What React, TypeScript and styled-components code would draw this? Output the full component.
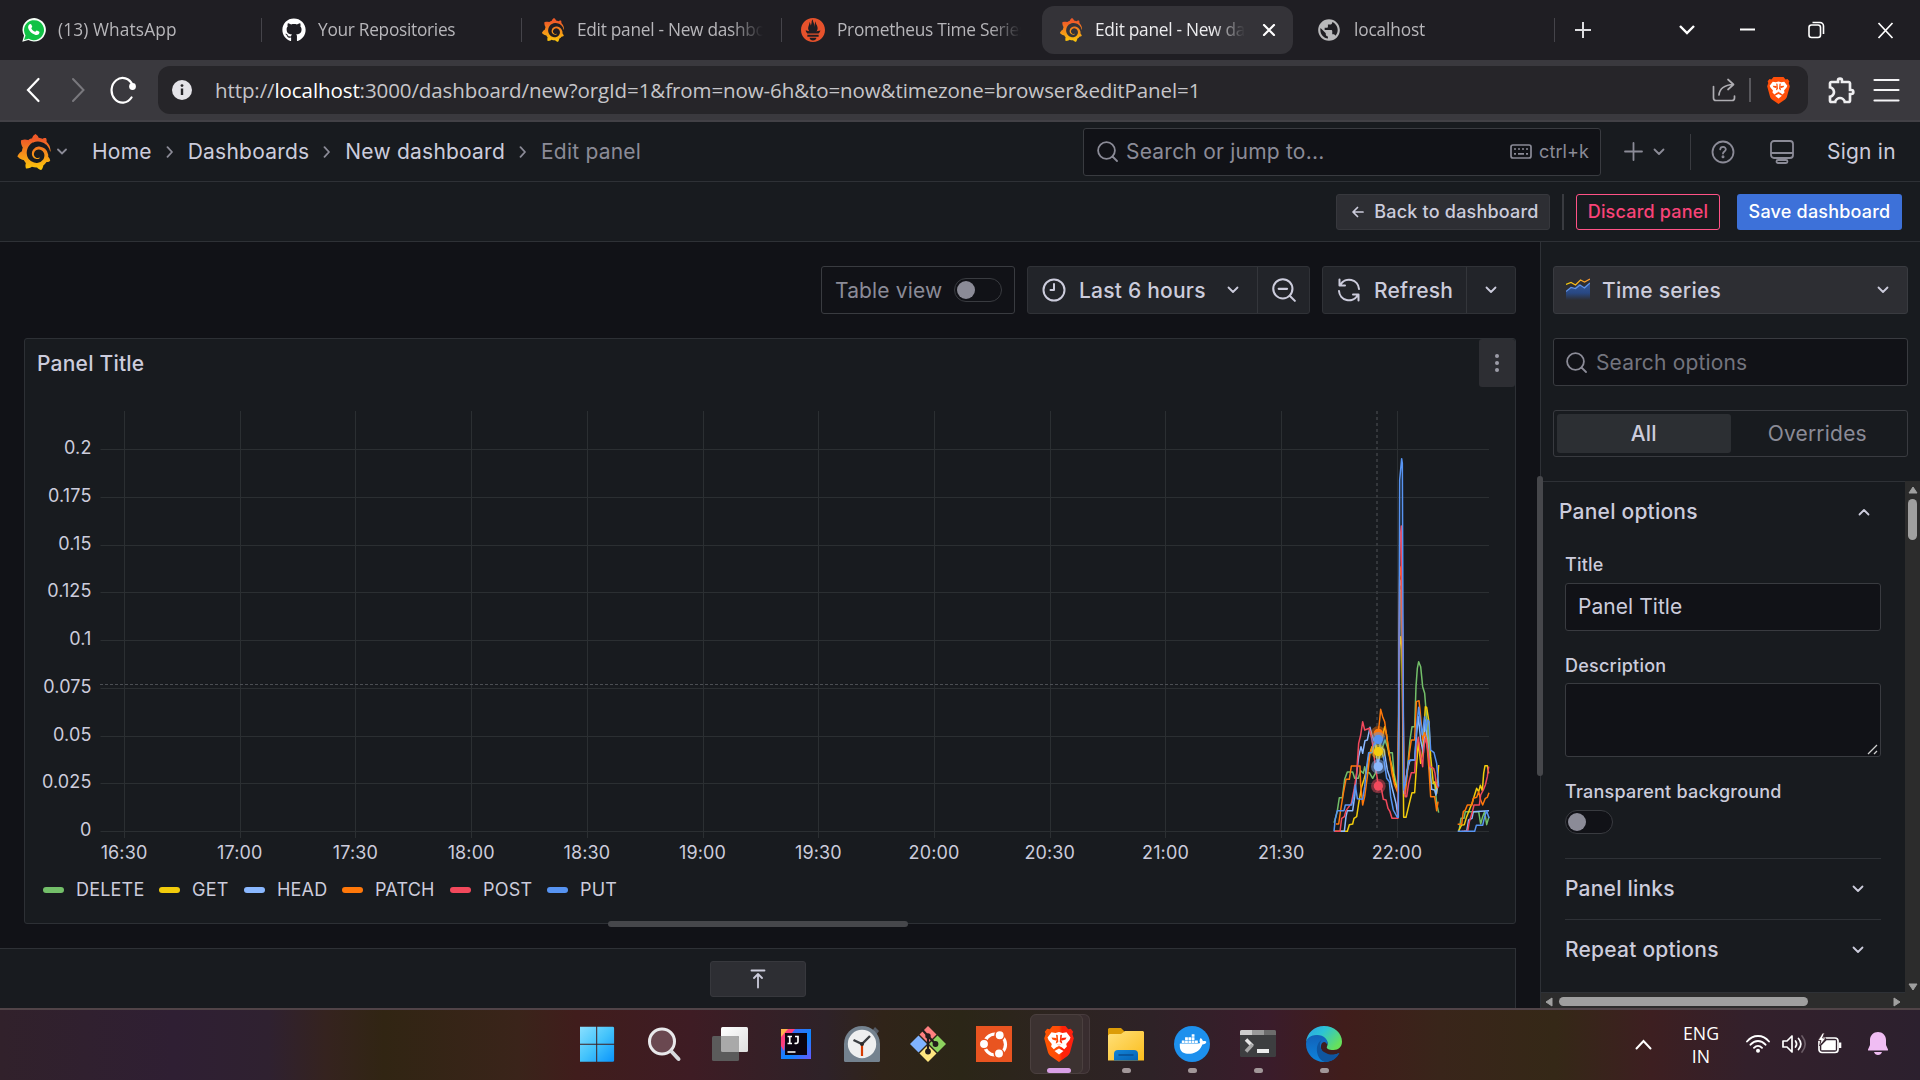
import React from "react";
import styled, { createGlobalStyle, css } from "styled-components";
import { FaGithub } from "react-icons/fa";
import { SiGrafana, SiPrometheus, SiDocker } from "react-icons/si";
import { MdPublic, MdOutlineExtension } from "react-icons/md";

const c = {
  canvas: "#111217",
  primary: "#181b1f",
  secondary: "#2d2e33",
  toolbar: "#222429",
  line: "#2e3136",
  border: "#393b40",
  text: "#ccccdc",
  muted: "#8b8b97",
};

const Global = createGlobalStyle`
  * { box-sizing: border-box; }
  body { margin: 0; background: ${c.canvas}; overflow: hidden; }
  svg { display: block; flex: none; }
`;

const Screen = styled.div`
  width: 1920px;
  height: 1080px;
  display: flex;
  flex-direction: column;
  overflow: hidden;
  font-family: Inter, "Liberation Sans", sans-serif;
  color: ${c.text};
  background: ${c.canvas};
`;

/* ---------- browser chrome ---------- */

const TabStrip = styled.div`
  height: 60px;
  flex: none;
  display: flex;
  align-items: center;
  background: #1f1e23;
  font-family: "Segoe UI", "Open Sans", "Noto Sans", sans-serif;
`;

const Tab = styled.div<{ $active?: boolean; $w: number; $pad: number }>`
  width: ${(p) => p.$w}px;
  height: 48px;
  flex: none;
  padding-left: ${(p) => p.$pad}px;
  display: flex;
  align-items: center;
  gap: 12px;
  border-radius: 12px;
  color: ${(p) => (p.$active ? "#ececee" : "#b7b6ba")};
  background: ${(p) => (p.$active ? "#343338" : "transparent")};
`;

const TabTitle = styled.span<{ $w: number; $ls?: number }>`
  width: ${(p) => p.$w}px;
  flex: none;
  overflow: hidden;
  white-space: nowrap;
  font-size: 17.3px;
  line-height: 26px;
  letter-spacing: ${(p) => p.$ls ?? -0.28}px;
  mask-image: linear-gradient(90deg, #000 calc(100% - 32px), transparent);
`;

const TabRule = styled.i`
  width: 1px;
  height: 24px;
  flex: none;
  background: #45444a;
`;

const WindowButtons = styled.div`
  flex: 1;
  height: 60px;
  display: flex;
  align-items: center;
  padding-left: 18px;
`;

const ControlSlot = styled.div<{ $w: number }>`
  width: ${(p) => p.$w}px;
  flex: none;
  display: flex;
`;

const AddressBar = styled.div`
  height: 62px;
  flex: none;
  display: flex;
  align-items: center;
  padding-left: 22px;
  background: #3a393e;
  border-bottom: 2px solid #424146;
`;

const NavIcons = styled.div`
  width: 136px;
  flex: none;
  display: flex;
  align-items: center;
`;

const UrlField = styled.div`
  width: 1650px;
  height: 48px;
  flex: none;
  display: flex;
  align-items: center;
  padding: 0 18px 0 14px;
  border-radius: 12px;
  background: #262529;
  color: #c6c5c9;
  font: 20.5px/28px "Segoe UI", "Open Sans", "Noto Sans", sans-serif;
`;

const Url = styled.span`
  flex: 1;
  padding: 0 0 0 23px;
  white-space: nowrap;
  letter-spacing: -0.09px;
  b { font-weight: 400; color: #fff; }
`;

/* ---------- grafana header ---------- */

const Header = styled.header`
  height: 60px;
  flex: none;
  display: flex;
  align-items: center;
  padding-left: 16px;
  background: ${c.primary};
  border-bottom: 1px solid ${c.line};
`;

const Crumbs = styled.nav`
  display: flex;
  align-items: center;
  width: 1016px;
  flex: none;
  padding-left: 25px;
  font-size: 21px;
  line-height: 30px;
  letter-spacing: 0.22px;
  white-space: nowrap;
`;

const Crumb = styled.span<{ $last?: boolean }>`
  color: ${(p) => (p.$last ? c.muted : c.text)};
`;

const CrumbSep = styled.span`
  width: 36px;
  display: flex;
  justify-content: center;
`;

const SearchBox = styled.div`
  width: 518px;
  height: 48px;
  flex: none;
  display: flex;
  align-items: center;
  padding: 0 11px 0 13px;
  border: 1px solid ${c.border};
  border-radius: 3px;
  background: ${c.canvas};
  color: ${c.muted};
  font-size: 21px;
  letter-spacing: 0.22px;
  span { flex: 1; padding-left: 8px; }
  small { font-size: 18px; padding-left: 7px; letter-spacing: 0.1px; }
`;

const HeaderActions = styled.div`
  display: flex;
  align-items: center;
  padding-left: 23px;
  font-size: 21px;
  letter-spacing: 0.22px;
  white-space: nowrap;
`;

const Rule = styled.i<{ $h: number; $ml: number; $mr: number; $w?: number; $color?: string }>`
  width: ${(p) => p.$w ?? 1}px;
  height: ${(p) => p.$h}px;
  flex: none;
  margin: 0 ${(p) => p.$mr}px 0 ${(p) => p.$ml}px;
  background: ${(p) => p.$color ?? c.border};
`;

const ActionRow = styled.div`
  height: 60px;
  flex: none;
  display: flex;
  align-items: center;
  justify-content: flex-end;
  padding: 1px 18px 0 0;
  background: ${c.primary};
  border-bottom: 1px solid ${c.line};
`;

const Button = styled.div<{ $kind: "secondary" | "outline" | "primary"; $w: number }>`
  width: ${(p) => p.$w}px;
  height: 36px;
  display: flex;
  align-items: center;
  justify-content: center;
  gap: 10px;
  padding-bottom: 1px;
  border-radius: 3px;
  font-size: 18px;
  font-weight: 500;
  letter-spacing: 0.2px;
  white-space: nowrap;
  ${(p) =>
    p.$kind === "secondary"
      ? css`background: ${c.secondary}; border: 1px solid #37383d; color: ${c.text}; padding-left: 5px;`
      : p.$kind === "outline"
      ? css`border: 1px solid #ff5286; color: #f94378;`
      : css`background: #3d71d9; color: #fff;`}
`;

const ButtonGap = styled.i`
  width: 17px;
`;

/* ---------- editor ---------- */

const Editor = styled.main`
  height: 766px;
  flex: none;
  display: flex;
`;

const Stage = styled.section`
  width: 1540px;
  flex: none;
  display: flex;
  flex-direction: column;
`;

const Toolbar = styled.div`
  height: 96px;
  flex: none;
  display: flex;
  align-items: center;
  justify-content: flex-end;
  gap: 12px;
  padding-right: 24px;
  font-size: 21px;
`;

const TableView = styled.div`
  width: 194px;
  height: 48px;
  display: flex;
  align-items: center;
  justify-content: space-between;
  padding: 0 12px 0 13px;
  border: 1px solid ${c.border};
  border-radius: 3px;
  color: ${c.muted};
  letter-spacing: 0.15px;
`;

const Switch = styled.i`
  width: 48px;
  height: 24px;
  display: flex;
  align-items: center;
  padding-left: 2px;
  border: 1px solid ${c.border};
  border-radius: 12px;
  background: ${c.canvas};
  &::before {
    content: "";
    width: 18px;
    height: 18px;
    border-radius: 50%;
    background: #8b8b97;
  }
`;

const Group = styled.div<{ $w: number }>`
  width: ${(p) => p.$w}px;
  height: 48px;
  display: flex;
  border: 1px solid #303237;
  border-radius: 3px;
  background: ${c.toolbar};
  font-weight: 500;
`;

const Segment = styled.div<{ $w?: number; $div?: boolean }>`
  ${(p) => (p.$w ? `flex: none; width: ${p.$w}px; justify-content: center;` : "flex: 1; min-width: 0; padding: 0 18px 0 14px;")}
  display: flex;
  align-items: center;
  border-left: ${(p) => (p.$div ? "1px solid #34363b" : "0")};
  span { flex: 1; min-width: 0; padding-left: 13px; letter-spacing: 0.22px; white-space: nowrap; }
`;

const Panel = styled.div`
  position: relative;
  width: 1492px;
  height: 586px;
  flex: none;
  margin-left: 24px;
  border: 1px solid #2d3035;
  border-radius: 3px;
  background: ${c.primary};
`;

const PanelHead = styled.div`
  height: 48px;
  display: flex;
  justify-content: space-between;
  align-items: center;
  padding-left: 12px;
  font-size: 21px;
  font-weight: 500;
  letter-spacing: 0.22px;
`;

const MenuButton = styled.div`
  width: 36px;
  height: 48px;
  display: flex;
  flex-direction: column;
  align-items: center;
  justify-content: center;
  gap: 3px;
  border-radius: 3px;
  background: ${c.secondary};
  padding-bottom: 1px;
  i { width: 4px; height: 4px; border-radius: 50%; background: #9c9ca8; }
`;

const AxisText = styled.text`
  font: 18px Inter, "Liberation Sans", sans-serif;
  letter-spacing: 0.12px;
  fill: ${c.text};
`;

const Legend = styled.div`
  display: flex;
  height: 30px;
  align-items: center;
  padding: 1px 0 0 18px;
  font-size: 18px;
`;

const LegendItem = styled.div<{ $w: number; $color: string }>`
  width: ${(p) => p.$w}px;
  display: flex;
  align-items: center;
  gap: 12px;
  letter-spacing: 0.2px;
  white-space: nowrap;
  &::before {
    content: "";
    width: 21px;
    height: 6px;
    border-radius: 3px;
    background: ${(p) => p.$color};
  }
`;

const HandleX = styled.i`
  position: absolute;
  left: 583px;
  bottom: -4px;
  width: 300px;
  height: 6px;
  border-radius: 3px;
  background: #46474b;
`;

const QueryPane = styled.div`
  width: 1516px;
  flex: 1;
  margin-top: 24px;
  padding-top: 12px;
  border: solid ${c.line};
  border-width: 1px 1px 0 0;
  background: ${c.primary};
`;

const ExpandButton = styled.div`
  width: 96px;
  height: 36px;
  margin-left: 710px;
  display: grid;
  place-items: center;
  border: 1px solid #37383d;
  border-radius: 3px;
  background: ${c.secondary};
`;

const Options = styled.aside`
  position: relative;
  width: 380px;
  display: flex;
  flex-direction: column;
  border-left: 1px solid ${c.line};
  background: ${c.primary};
`;

const HandleY = styled.i`
  position: absolute;
  left: -4px;
  top: 234px;
  width: 6px;
  height: 300px;
  border-radius: 3px;
  background: #46474b;
`;

const OptionsTop = styled.div`
  height: 239px;
  flex: none;
  display: flex;
  flex-direction: column;
  gap: 24px;
  padding: 24px 12px 0 12px;
  font-size: 21px;
`;

const Field = styled.div<{ $filled?: boolean }>`
  height: 48px;
  display: flex;
  align-items: center;
  padding: 0 18px 0 12px;
  border: 1px solid ${c.border};
  border-radius: 3px;
  background: ${(p) => (p.$filled ? c.secondary : c.canvas)};
  color: ${(p) => (p.$filled ? c.text : "#73747e")};
  font-weight: ${(p) => (p.$filled ? 500 : 400)};
  letter-spacing: ${(p) => (p.$filled ? 0.22 : 0.15)}px;
  span { flex: 1; padding-left: ${(p) => (p.$filled ? 12 : 9)}px; }
`;

const Radio = styled.div`
  height: 47px;
  display: flex;
  padding: 3px;
  border: 1px solid ${c.border};
  border-radius: 3px;
`;

const RadioItem = styled.div<{ $on?: boolean }>`
  flex: 1;
  display: grid;
  place-items: center;
  border-radius: 3px;
  letter-spacing: 0.2px;
  background: ${(p) => (p.$on ? "#2c2f33" : "transparent")};
  color: ${(p) => (p.$on ? c.text : c.muted)};
  font-weight: ${(p) => (p.$on ? 500 : 400)};
`;

const ScrollArea = styled.div`
  height: 512px;
  flex: none;
  display: flex;
`;

const OptionList = styled.div`
  flex: 1;
  padding: 0 24px 0 24px;
  border: solid ${c.line};
  border-width: 1px 0;
`;

const GroupTitle = styled.div<{ $sub?: boolean }>`
  height: ${(p) => (p.$sub ? 61 : 60)}px;
  display: flex;
  align-items: center;
  justify-content: space-between;
  font-size: 21px;
  font-weight: 500;
  letter-spacing: 0.22px;
  ${(p) =>
    p.$sub
      ? css`border-top: 1px solid ${c.line}; padding: 0 17px 1px 0;`
      : css`margin-left: -6px; padding: 0 11px 1px 0;`}
`;

const Label = styled.div<{ $mt: number; $mb: number }>`
  margin: ${(p) => p.$mt}px 0 ${(p) => p.$mb}px;
  height: 24px;
  font-size: 18px;
  font-weight: 500;
  line-height: 24px;
  letter-spacing: 0.22px;
`;

const TextInput = styled.div`
  height: 48px;
  display: flex;
  align-items: center;
  padding: 0 12px 1px;
  border: 1px solid ${c.border};
  border-radius: 3px;
  background: ${c.canvas};
  font-size: 21px;
  letter-spacing: 0.05px;
`;

const TextArea = styled(TextInput)`
  height: 74px;
  align-items: flex-end;
  justify-content: flex-end;
  padding: 0 2px 1px;
  margin-bottom: 23px;
`;

const LinkGroups = styled.div`
  margin-top: 24px;
`;

const ScrollY = styled.div`
  width: 15px;
  display: flex;
  flex-direction: column;
  align-items: center;
  padding-top: 5px;
  background: #2c2c2c;
  i { width: 9px; height: 41px; margin: 5px 0 443px; border-radius: 5px; background: #9f9f9f; }
`;

const ScrollX = styled.div`
  flex: 1;
  display: flex;
  align-items: center;
  padding: 2px 0 0 4px;
  background: #2c2c2c;
  i { width: 249px; height: 9px; margin: 0 85px 0 6px; border-radius: 5px; background: #9f9f9f; }
`;

/* ---------- taskbar ---------- */

const Taskbar = styled.footer`
  height: 72px;
  flex: none;
  display: flex;
  border-top: 2px solid #514448;
  background: linear-gradient(90deg, #31212b 0, #2f1f33 9%, #2f2130 14%, #35231f 17%, #312513 20%, #3a241a 27%,
    #401d1c 30%, #3e1c24 36%, #2e2228 43%, #302419 46%, #2b2617 50%, #2d2420 55%, #2e2227 60%, #3a1c2b 66%,
    #401d1b 70%, #39251a 75%, #352817 81%, #3d1f21 86%, #33202b 91%, #2c202e 100%);
`;

const AppRow = styled.div`
  width: 792px;
  flex: none;
  margin-left: 565px;
  display: flex;
`;

const AppSlot = styled.div`
  width: 66px;
  height: 70px;
  flex: none;
  display: flex;
  flex-direction: column;
  align-items: center;
  justify-content: space-between;
  padding: 16px 0 7px;
`;

const ActiveSlot = styled(AppSlot)`
  padding: 4px 8px 0 0;
  justify-content: flex-start;
`;

const ActiveTile = styled.div`
  width: 53px;
  height: 60px;
  display: flex;
  flex-direction: column;
  align-items: center;
  justify-content: space-between;
  padding: 11px 0 0 6px;
  border-radius: 6px;
  border: 1px solid #4b403f;
  background: #3c3231;
  box-shadow: 7px 0 0 -1px #392d2f, 7px 0 0 0 #473b3d;
`;

const Pill = styled.i<{ $on?: boolean; $hidden?: boolean }>`
  width: ${(p) => (p.$on ? 24 : 9)}px;
  height: 5px;
  border-radius: 3px;
  background: ${(p) => (p.$hidden ? "transparent" : p.$on ? "#d9a0e6" : "#a29799")};
`;

const Tray = styled.div`
  flex: 1;
  display: flex;
  align-items: center;
  padding: 0 0 2px 278px;
  color: #fff;
`;

const Language = styled.div`
  width: 50px;
  flex: none;
  margin: 2px 20px 0 24px;
  text-align: center;
  font: 17.7px/23px "Segoe UI", "Open Sans", "Noto Sans", sans-serif;
`;

const GradientIcon = styled.span<{ $id: string }>`
  display: flex;
  justify-content: center;
  path { fill: url(#${(p) => p.$id}); }
`;

/* ---------- icons ---------- */

const GrafanaMark = ({ size }: { size: number }) => (
  <GradientIcon $id="grafana">
    <SiGrafana size={size} />
  </GradientIcon>
);

type ChevronProps = { w?: number; dir?: "up" | "down" | "right"; color?: string; sw?: number };
const Chevron = ({ w = 12, dir = "down", color = c.text, sw = 1.8 }: ChevronProps) => (
  <svg width={dir === "right" ? 8 : w} height={dir === "right" ? w : 8} viewBox={dir === "right" ? "0 0 8 12" : "0 0 12 8"}>
    <path
      d={dir === "down" ? "M1.5 1.5 6 6l4.500-4.500" : dir === "up" ? "M1.500 6.500 6 2l4.500 4.500" : "M1.500 1.200 6 6 1.500 10.800"}
      fill="none" stroke={color} strokeWidth={sw} strokeLinecap="round" strokeLinejoin="round"
    />
  </svg>
);

const SearchIcon = ({ color = c.muted, minus = false, size = 21 }) => (
  <svg width={size} height={size} viewBox="0 0 21 21" fill="none" stroke={color} strokeWidth="1.8" strokeLinecap="round">
    <circle cx="9.500" cy="9.500" r="8.400" />
    <path d="M15.500 15.500 20 20" />
    {minus && <path d="M5.800 9.500h7.400" />}
  </svg>
);

const WhatsAppIcon = () => (
  <svg width="24" height="24" viewBox="0 0 24 24">
    <path d="M.3 23.700 2 17.600A11.700 11.700 0 1 1 6.400 22z" fill="#f5fff7" />
    <path d="M2 22 3.500 17.400A10 10 0 1 1 6.800 20.700z" fill="#10c245" />
    <path d="M7.200 6.500c.9-1 1.900-.6 2.100 0l.9 2c.2.6-.8 1.300-.9 1.700.8 1.700 2.200 2.900 3.900 3.600.5 0 1.200-1.300 1.600-1.200l2.200 1c.9.4.3 2-.3 2.600-1.500 1.400-4 .8-6.200-.7-2-1.400-3.900-3.600-4.300-5.600-.2-1.300.2-2.500 1-3.400z" fill="#fff" />
  </svg>
);

const BraveIcon = ({ w, h, fill }: { w: number; h: number; fill: string }) => (
  <svg width={w} height={h} viewBox="0 0 30 36" preserveAspectRatio="none">
    <path d="M8.500 0h13l2.700 3.200 2.600-.4 2.400 3-.9 2.300 1.500 4.100-3.600 13.600c-.5 1.800-1.200 3-2.700 4.200L15 36l-8.500-6c-1.500-1.200-2.200-2.400-2.700-4.200L.2 12.200l1.500-4.100-.9-2.300 2.400-3 2.600.4z" fill={fill} />
    <path d="M7.500 6.200 11.500 7 15 6l3.500 1 4-.8L26.500 11.500l-1 2.500-3.300 4 .7 2.500-2.700 2.700-2.500-1.900L15 20l-2.700 1.300-2.500 1.900-2.700-2.700.7-2.500-3.300-4-1-2.500z" fill="#fff" />
    <path d="M10.500 25 15 22.500l4.500 2.500L15 28.500z" fill="#fff" />
    <g fill={fill}>
      <path d="M7.500 11.500 12.500 12l.6 1.800-1.600.8-3-1.100zM22.500 11.500 17.500 12l-.6 1.800 1.600.8 3-1.100z" />
      <path d="M12 8.800 13.700 9l.6 7-2.300 1.500 3 1.600 3-1.600-2.300-1.500.6-7 1.700-.2-.6 5 .9 3.500-3.300 2.100-3.300-2.100.9-3.500z" />
    </g>
  </svg>
);

const ShareIcon = () => (
  <svg width="24" height="24" viewBox="0 0 24 24" fill="none" stroke="#aeadb2" strokeWidth="1.700" strokeLinecap="round" strokeLinejoin="round">
    <path d="M1.500 8.500v11.500a2.500 2.500 0 0 0 2.500 2.500h16a2.500 2.500 0 0 0 2.500-2.500v-2" />
    <path d="M7 17c.5-6 5-10 14.500-10.500M16 1.500l5.500 5-5.500 5" />
  </svg>
);

const KeyboardIcon = () => (
  <svg width="22" height="15" viewBox="0 0 22 15" fill="none" stroke={c.muted} strokeWidth="1.700">
    <rect x="1" y="1" width="20" height="13" rx="2" />
    <path d="M4 5h14" strokeDasharray="2 2" />
    <path d="M4 9.800h2M8 9.800h6M16 9.800h2" />
  </svg>
);

const HelpIcon = () => (
  <svg width="24" height="24" viewBox="0 0 24 24" fill="none" stroke={c.muted} strokeWidth="1.800" strokeLinecap="round">
    <circle cx="12" cy="12" r="10.500" />
    <path d="M9.200 9.400c.2-3.400 5.800-3.300 5.600.1-.1 2-2.800 1.900-2.800 4" />
    <circle cx="12" cy="16.700" r=".6" fill={c.muted} />
  </svg>
);

const MonitorIcon = () => (
  <svg width="24" height="24" viewBox="0 0 24 24" fill="none" stroke={c.muted} strokeWidth="1.800" strokeLinejoin="round">
    <rect x="1" y="1" width="22" height="17" rx="3" />
    <path d="M1 13h22M10 18v2M14 18v2" />
    <rect x="6.500" y="20" width="11" height="3" rx="1.500" />
  </svg>
);

const ClockIcon = () => (
  <svg width="24" height="24" viewBox="0 0 24 24" fill="none" stroke={c.text} strokeWidth="2" strokeLinecap="round" strokeLinejoin="round">
    <circle cx="12" cy="12" r="10.500" />
    <path d="M12 6v6H8.500" />
  </svg>
);

const RefreshIcon = () => (
  <svg width="24" height="24" viewBox="0 0 24 24" fill="none" stroke={c.text} strokeWidth="2" strokeLinecap="round" strokeLinejoin="round">
    <path d="M22 11A10 10 0 0 0 3.500 6.500M2.500 1.500v6H8" />
    <path d="M2 13a10 10 0 0 0 18.500 4.500M21.500 22.500v-6H16" />
  </svg>
);

const SeriesIcon = () => (
  <svg width="24" height="24" viewBox="0 0 24 24" fill="none">
    <path d="M0 14 5 9.500 8 10.500l5-4.500 4 3.500 7-5V22H0z" fill="url(#area)" />
    <path d="M0 13.500 5 9.500l4.500 1L14 7l4.500 3L24 5" stroke="#5f93e8" strokeWidth="1.200" />
    <path d="M0 6.500 5 4.500 9.500 7 14.500 2l4 2L24 1" stroke="url(#amber)" strokeWidth="1.300" />
  </svg>
);

const Triangle = ({ d, w, h }: { d: string; w: number; h: number }) => (
  <svg width={w} height={h} viewBox={`0 0 ${w} ${h}`}><path d={d} fill="#a0a0a0" stroke="#a0a0a0" strokeLinejoin="round" /></svg>
);

/* ---------- chart ---------- */

const xTicks = ["16:30", "17:00", "17:30", "18:00", "18:30", "19:00", "19:30", "20:00", "20:30", "21:00", "21:30", "22:00"];
const yTicks: [string, number][] = [["0.2", 449], ["0.175", 497], ["0.15", 545], ["0.125", 592], ["0.1", 640], ["0.075", 688], ["0.05", 736], ["0.025", 783], ["0", 831]];

const series: { color: string; runs: string[] }[] = [
  { color: "#73bf69", runs: [
    "72,1208 78,1190 82,1172 88,1133 97,1133 104,1078 112,1056 128,1056 134,1075 145,1075 152,1052 160,1060 164,1040 168,1058 178,1058 188,1075 196,1060 208,1010 225,960 238,998 247,998 252,1060 264,1115 270,510 275,515 281,1130 292,1050 300,960 306,920 314,920 318,800 322,745 326,725 332,740 338,800 344,820 348,870 354,940 360,1040 364,1090 374,1092 380,1150 386,1178",
    "447,1234 453,1195 462,1195 466,1175 506,1175 512,1212 518,1190 524,1175 530,1214 537,1190"] },
  { color: "#f2cc0c", runs: [
    "72,1234 112,1234 118,1214 128,1212 132,1195 140,1190 146,1150 155,1100 162,1078 170,1050 176,1010 186,980 196,970 205,995 215,960 224,920 230,945 236,1000 246,1040 254,1085 264,1110 269,690 272,650 276,680 281,1192 288,1192 298,1150 306,1118 314,1118 318,1060 325,965 332,1030 337,1000 342,930 346,860 350,862 356,900 362,1010 370,1090 375,1085 380,1120 386,1035",
    "445,1234 455,1215 463,1214 470,1190 478,1170 486,1150 492,1130 500,1105 506,1115 511,1096 517,1112 521,1060 525,1037 532,1037 536,1060"] },
  { color: "#8ab8ff", runs: [
    "88,1234 103,1234 108,1190 112,1172 128,1172 134,1130 140,1060 146,1010 153,980 158,1000 165,962 172,960 180,922 186,945 195,970 204,1040 212,980 222,990 232,1050 240,1075 248,1110 258,1150 264,1190 270,480 276,500 282,1120 292,1050 300,1020 314,1020 320,940 325,890 332,960 340,1000 346,900 352,960 360,1060 365,1108 374,1110 378,1125 384,1090",
    "462,1234 470,1234 476,1200 486,1195 490,1175 537,1172"] },
  { color: "#ff780a", runs: [
    "78,1212 86,1212 92,1170 100,1120 108,1078 118,1078 124,1038 150,1038 152,1095 158,1155 164,1130 172,1070 180,1000 195,960 205,935 209,900 212,868 218,890 224,905 230,950 238,1000 246,1060 254,1095 264,1120 269,470 273,440 276,500 281,1080 286,1120 298,1000 304,960 314,960 319,845 327,842 331,880 338,960 344,938 350,960 357,1050 362,1130 374,1130 380,1172 384,1145",
    "443,1213 455,1213 460,1175 466,1170 472,1155 486,1155 490,1135 500,1132 506,1115 512,1140 518,1155 526,1135 532,1132 537,1118"] },
  { color: "#f2495c", runs: [
    "72,1234 90,1234 95,1195 103,1190 108,1172 124,1150 132,1110 140,1060 146,970 152,945 158,905 164,930 178,925 186,960 195,1030 205,1098 215,1110 220,1138 228,1140 234,1165 240,1175 246,1195 264,1195 270,360 274,318 277,600 282,1090 286,1130 290,1130 296,1090 304,1058 314,1058 319,980 325,952 331,1000 338,1040 341,985 346,955 350,970 355,1000 360,1040 371,1045 375,1060 378,1085 384,1105",
    "455,1234 473,1234 478,1205 486,1180 492,1155 508,1155 512,1125 520,1110 526,1095 532,1070 536,1040"] },
  { color: "#5794f2", runs: [
    "72,1234 76,1195 82,1172 102,1172 106,1155 125,1155 131,1130 136,1096 142,1136 158,1138 164,1100 170,1040 176,998 186,998 192,975 205,958 214,990 222,1020 230,1075 238,1085 242,1130 250,1170 262,1192 265,1192 269,180 275,116 277,130 281,1110 288,1080 296,1022 314,1020 320,920 326,862 332,910 337,945 344,890 348,930 353,900 357,905 362,990 372,998 380,1030 386,1100",
    "443,1234 494,1234 499,1216 518,1216 524,1190 530,1172 537,1195"] },
];

const markers: [number, string][] = [[940, "#ff780a"], [958, "#5794f2"], [995, "#f2cc0c"], [1040, "#8ab8ff"], [1098, "#f2495c"]];

const Chart = () => (
  <svg width="1490" height="487" viewBox="25 387 1490 487">
    <g stroke="#2b2f32" strokeWidth="1">
      {yTicks.map(([t, y]) => <path key={t} d={`M100.500 ${y + 0.5}H1489`} />)}
      {xTicks.map((t, i) => <path key={t} d={`M${Math.floor(124.5 + i * 115.72) + 0.5} 411V838`} />)}
    </g>
    {yTicks.map(([t, y]) => <AxisText key={t} x="91.500" y={y + 5} textAnchor="end">{t}</AxisText>)}
    {xTicks.map((t, i) => <AxisText key={t} x={124 + i * 115.72} y="859" textAnchor="middle">{t}</AxisText>)}
    <path d="M100 684.500H1489" stroke="#4b4e53" strokeDasharray="3 2" />
    <path d="M1377 411V831" stroke="#34373b" strokeWidth="2" strokeDasharray="3 3" />
    <g transform="translate(1310 420) scale(.33333)" fill="none" strokeWidth="4.500" strokeLinejoin="round">
      {series.map((s) => s.runs.map((r) => <polyline key={r} points={r} stroke={s.color} />))}
      {markers.map(([y, color]) => (
        <g key={color} fill={color}>
          <circle cx="205" cy={y} r="22" opacity=".45" />
          <circle cx="205" cy={y} r="14" />
        </g>
      ))}
    </g>
  </svg>
);

const legend: [string, number, string][] = [
  ["DELETE", 116, "#73bf69"], ["GET", 85, "#f2cc0c"], ["HEAD", 98, "#8ab8ff"],
  ["PATCH", 108, "#ff780a"], ["POST", 97, "#f2495c"], ["PUT", 90, "#5794f2"],
];

/* ---------- taskbar icons ---------- */

const apps: { icon: React.ReactNode; open?: boolean }[] = [
  { icon: (
    <svg width="36" height="36" viewBox="1.500 0 36 36" fill="url(#win)">
      <path d="M2 .8h15.700v16.900H.6V2.200A1.400 1.400 0 0 1 2 .8zM18.700.8h15.500a1.400 1.400 0 0 1 1.400 1.400v15.500H18.700zM.6 18.800h17.100v17H2a1.400 1.400 0 0 1-1.400-1.400zM18.700 18.800h16.900v15.600a1.400 1.400 0 0 1-1.400 1.400H18.700z" />
    </svg>) },
  { icon: (
    <svg width="36" height="36" viewBox="0 0 36 36">
      <circle cx="16" cy="15.500" r="12.500" fill="#6a4850" stroke="#e9e9eb" strokeWidth="3" />
      <path d="M25.500 25.500 32.500 33" stroke="#d6dadd" strokeWidth="4" strokeLinecap="round" />
    </svg>) },
  { icon: (
    <svg width="36" height="36" viewBox="0 0 36 36">
      <rect x="9" y="1" width="27" height="25" rx="1.500" fill="url(#paper)" />
      <rect x="0" y="10" width="27" height="25" rx="1.500" fill="#5b5b5b" />
      <path d="M9 10h16.500a1.500 1.500 0 0 1 1.500 1.500V26H10.500A1.500 1.500 0 0 1 9 24.500z" fill="#a9a9a9" />
    </svg>) },
  { icon: (
    <svg width="36" height="36" viewBox="0 0 36 36">
      <rect x="3" y="3" width="30" height="30" fill="url(#ij)" />
      <path d="M3 3h14L7 16 6 25 3 20z" fill="#fd3d7c" /><path d="M3 3h7L3 11z" fill="#ffb34d" />
      <rect x="7" y="7" width="22" height="22" fill="#0b0410" />
      <path d="M9.500 10.500h4.500M11.750 10.500v7M9.500 17.500h4.500M17 10.500h3v5c0 2-2 2.200-3.500 1.700M9.500 26h8" stroke="#fff" strokeWidth="1.700" fill="none" />
    </svg>) },
  { icon: (
    <svg width="36" height="36" viewBox="0 0 36 36">
      <path d="m28 5 3-4 4 4-3 4z" fill="#555c66" />
      <path d="M18 0a18 18 0 0 1 18 18v16.500a1.500 1.500 0 0 1-1.500 1.500h-33A1.500 1.500 0 0 1 0 34.500V18A18 18 0 0 1 18 0z" fill="#74828f" />
      <circle cx="18" cy="18" r="14.200" fill="#eeeff0" />
      <path d="m9.500 14 8.500 4 8-8" stroke="#3c3f43" strokeWidth="2.400" fill="none" />
      <path d="M18 18v12" stroke="#d83b01" strokeWidth="2.200" /><circle cx="18" cy="18" r="2" fill="#2b2b2b" />
    </svg>) },
  { icon: (
    <svg width="36" height="36" viewBox="0 0 36 36">
      <path d="m18 0 8.500 8.500L18 17 9.500 8.500z" fill="#ff8080" />
      <path d="m8.500 9.500 8.500 8.500-8.500 8.500L0 18z" fill="#80b3ff" />
      <path d="m27.500 9.500 8.500 8.500-8.500 8.500L19 18z" fill="#8dd35f" />
      <path d="m18 19 8.500 8.500L18 36l-8.500-8.500z" fill="#ffe680" />
      <path d="M12 3.500 18 10v15M18 10l7.500 8" stroke="#241c1c" strokeWidth="2.200" fill="none" />
      <g fill="#241c1c"><circle cx="18" cy="10" r="2.700" /><circle cx="18" cy="25.500" r="2.900" /><circle cx="25.500" cy="18" r="2.900" /></g>
    </svg>) },
  { icon: (
    <svg width="36" height="36" viewBox="0 0 36 36">
      <path d="M0 0h36v36H0z" fill="#e95420" />
      <circle cx="19" cy="18.500" r="10.500" fill="none" stroke="#fff" strokeWidth="3.200" />
      <g fill="#fff" stroke="#e95420" strokeWidth="1.500"><circle cx="8" cy="18" r="4.700" /><circle cx="23.700" cy="9.300" r="4.700" /><circle cx="23" cy="27.500" r="4.700" /></g>
    </svg>) },
  { icon: null },
  { open: true, icon: (
    <svg width="36" height="36" viewBox="0 0 36 36">
      <path d="M1 2h12l4 4v4H0V3z" fill="#dc9c08" />
      <path d="M0 9.500 1.500 8H13l4-3h18l1 1v28.500H0z" fill="url(#folder)" />
      <path d="M6 34.500V28a4 4 0 0 1 4-4h16a4 4 0 0 1 4 4v6.500z" fill="url(#tray)" /><path d="M11 29h14" stroke="#084e91" strokeWidth="1.500" strokeLinecap="round" />
    </svg>) },
  { open: true, icon: (
    <svg width="36" height="36" viewBox="0 0 36 36">
      <circle cx="18" cy="18" r="18" fill="#1d90ed" />
      <SiDocker x={5.5} y={4.500} size={27} color="#fff" />
    </svg>) },
  { open: true, icon: (
    <svg width="36" height="36" viewBox="0 0 36 36">
      <rect y="4" width="36" height="27" rx="1.500" fill="#3d3e40" />
      <path d="M0 9V5.500A1.500 1.500 0 0 1 1.500 4H12v5z" fill="#ccc" /><path d="M12 4h12v5H12z" fill="#9a9a9a" /><path d="M24 4h10.500A1.500 1.500 0 0 1 36 5.500V9H24z" fill="#6c6c6c" />
      <path d="m6 13.500 6.500 6.500" stroke="#e5e5e5" strokeWidth="3.600" /><path d="M12.500 18.500 6 25.500" stroke="#a8a8a8" strokeWidth="3.600" />
      <path d="M17 23h12v4H17z" fill="#ececec" />
    </svg>) },
  { open: true, icon: (
    <svg width="36" height="36" viewBox="0 0 36 36">
      <path d="M0 16C1 7 8 0 18 0c10.500 0 18 7.500 18 15.500 0 5.500-3.500 8.500-8.500 8.500-5 0-7.500-1.500-6.500-3.500 2.500-5-2-9-8-10.500-6-1-11 2-13 6z" fill="url(#edgeTop)" />
      <path d="M0 18C0 12 5 9 11 9c7 0 11.500 4.500 10.500 10-3-7-9-1-5.500 6 3.500 6 11 5 17 2-2.500 5-8 9-15 9C8 36 0 28 0 18z" fill="url(#edgeLeft)" />
      <path d="M16 13.500c-3.500 3.500-2 10 2 12.500 4.500 3 9.500 3.500 15.500 1-2.500 5-7.500 9-14.500 9-8-1.500-12-17-3-22.500z" fill="#0f559f" />
    </svg>) },
];

const Gradients = () => (
  <svg width="0" height="0" style={{ position: "absolute" }}>
    <defs>
      <linearGradient id="grafana" x1="0" y1="0" x2="0" y2="1"><stop offset=".15" stopColor="#f05a28" /><stop offset="1" stopColor="#fbca0a" /></linearGradient>
      <linearGradient id="brave" gradientUnits="userSpaceOnUse" x1="0" y1="0" x2="30" y2="0"><stop stopColor="#ff5601" /><stop offset=".5" stopColor="#ff4b08" /><stop offset=".6" stopColor="#ff2208" /><stop offset="1" stopColor="#ff2010" /></linearGradient>
      <linearGradient id="area" x1="0" y1="0" x2="0" y2="1"><stop stopColor="#35599c" /><stop offset=".6" stopColor="#284883" /><stop offset="1" stopColor="#284883" stopOpacity="0" /></linearGradient>
      <linearGradient id="amber" x1="0" y1="0" x2="1" y2="0"><stop stopColor="#f2cc0c" /><stop offset="1" stopColor="#ff9830" /></linearGradient>
      <linearGradient id="win" x1="0" y1="0" x2="1" y2="1"><stop stopColor="#8be0ff" /><stop offset=".5" stopColor="#45c4fb" /><stop offset="1" stopColor="#0a94fb" /></linearGradient>
      <linearGradient id="paper" x1="0" y1="0" x2="1" y2="1"><stop stopColor="#fff" /><stop offset="1" stopColor="#dedede" /></linearGradient>
      <linearGradient id="ij" x1="0" y1="0" x2="1" y2="1"><stop stopColor="#ff318c" /><stop offset=".25" stopColor="#3a6df5" /><stop offset=".6" stopColor="#0b86ff" /><stop offset="1" stopColor="#6b57ff" /></linearGradient>
      <linearGradient id="folder" x1="0" y1="0" x2="1" y2="1"><stop stopColor="#ffe07a" /><stop offset="1" stopColor="#fbbd1c" /></linearGradient>
      <linearGradient id="tray" x1="0" y1="0" x2="1" y2="1"><stop stopColor="#1384d8" /><stop offset="1" stopColor="#0462b4" /></linearGradient>
      <linearGradient id="edgeTop" x1="0" y1="0" x2="1" y2=".6"><stop stopColor="#2b9fe8" /><stop offset=".45" stopColor="#2cc3d5" /><stop offset="1" stopColor="#67e05a" /></linearGradient>
      <linearGradient id="edgeLeft" x1="0" y1="0" x2="0" y2="1"><stop stopColor="#1261b8" /><stop offset="1" stopColor="#0d84dc" /></linearGradient>
    </defs>
  </svg>
);

export default function App() {
  return (
    <Screen>
      <Global />
      <Gradients />

      <TabStrip>
        <Tab $w={261} $pad={22}><WhatsAppIcon /><TabTitle $w={185} $ls={0.12}>(13) WhatsApp</TabTitle></Tab>
        <TabRule />
        <Tab $w={259} $pad={20}><FaGithub size={24} color="#fff" /><TabTitle $w={185}>Your Repositories</TabTitle></Tab>
        <TabRule />
        <Tab $w={259} $pad={19}><GrafanaMark size={24} /><TabTitle $w={186}>Edit panel - New dashboard</TabTitle></Tab>
        <TabRule />
        <Tab $w={260} $pad={19}><SiPrometheus size={24} color="#e6522c" /><TabTitle $w={184}>Prometheus Time Series Collection</TabTitle></Tab>
        <Tab $active $w={251} $pad={17}>
          <GrafanaMark size={24} /><TabTitle $w={150}>Edit panel - New dashboard</TabTitle>
          <svg width="26" height="12" viewBox="0 0 26 12"><path d="m7 1 10 10M17 1 7 11" stroke="#fff" strokeWidth="2.200" strokeLinecap="round" /></svg>
        </Tab>
        <Tab $w={261} $pad={23}><MdPublic size={26} color="#b9b9bb" /><TabTitle $w={180} $ls={-0.15}>localhost</TabTitle></Tab>
        <TabRule />
        <WindowButtons>
          <ControlSlot $w={105}><svg width="20" height="20" viewBox="0 0 20 20" stroke="#dddde0" strokeWidth="2"><path d="M10 2v16M2 10h16" /></svg></ControlSlot>
          <ControlSlot $w={61}><svg width="18" height="12" viewBox="0 0 18 12"><path d="m2 2 7 7 7-7" fill="none" stroke="#fff" strokeWidth="2.400" /></svg></ControlSlot>
          <ControlSlot $w={69}><svg width="17" height="4" viewBox="0 0 17 4"><path d="M1 1.500h15" stroke="#fff" strokeWidth="2" /></svg></ControlSlot>
          <ControlSlot $w={69}><svg width="17" height="18" viewBox="0 0 17 18" fill="none" stroke="#fff" strokeWidth="1.600"><rect x="1" y="4" width="11.500" height="12.500" rx="2.500" /><path d="M4.500 1.500h7.500a3.500 3.500 0 0 1 3.500 3.500v8" /></svg></ControlSlot>
          <svg width="17" height="17" viewBox="0 0 17 17"><path d="m1.500 1 14 15M15.500 1l-14 15" stroke="#fff" strokeWidth="1.700" /></svg>
        </WindowButtons>
      </TabStrip>

      <AddressBar>
        <NavIcons>
          <ControlSlot $w={45}><svg width="20" height="28" viewBox="0 0 20 28"><path d="M16.500 3 6 14l10.500 11" fill="none" stroke="#fff" strokeWidth="2.200" strokeLinecap="round" /></svg></ControlSlot>
          <ControlSlot $w={43}><svg width="20" height="28" viewBox="0 0 20 28"><path d="M6 3 16.500 14 6 25" fill="none" stroke="#79787d" strokeWidth="2" strokeLinecap="round" /></svg></ControlSlot>
          <svg width="26" height="28" viewBox="0 0 26 28"><path d="M21.500 21.500A11 12.300 0 1 1 22.500 9" fill="none" stroke="#fff" strokeWidth="2.200" strokeLinecap="round" /><circle cx="22.500" cy="10.500" r="3.400" fill="#fff" /></svg>
        </NavIcons>
        <UrlField>
          <svg width="20" height="20" viewBox="0 0 20 20"><circle cx="10" cy="10" r="10" fill="#e4e3e8" /><circle cx="10" cy="5.600" r="1.400" fill="#262529" /><path d="M10 8.500V15" stroke="#262529" strokeWidth="2.400" /></svg>
          <Url>http://<b>localhost</b>:3000/dashboard/new?orgId=1&amp;from=now-6h&amp;to=now&amp;timezone=browser&amp;editPanel=1</Url>
          <ShareIcon />
          <Rule $h={24} $ml={13} $mr={16} $w={2} $color="#59585d" />
          <BraveIcon w={23} h={27} fill="#ff4f0a" />
        </UrlField>
        <ControlSlot $w={65}><svg width="65" height="32" viewBox="0 0 65 32"><MdOutlineExtension x={18} y={0} size={32} color="#eeeef0" /></svg></ControlSlot>
        <svg width="28" height="26" viewBox="0 0 28 26"><path d="M1.500 3h24M1.500 13h24M1.500 23.500h24" stroke="#f4f4f6" strokeWidth="2.200" strokeLinecap="round" /></svg>
      </AddressBar>

      <Header>
        <ControlSlot $w={36}><GrafanaMark size={36} /></ControlSlot>
        <ControlSlot $w={15}><svg width="15" height="8" viewBox="0 0 15 8"><path d="m6 1.500 4 4 4-4" fill="none" stroke={c.muted} strokeWidth="1.800" strokeLinecap="round" /></svg></ControlSlot>
        <Crumbs>
          <Crumb>Home</Crumb><CrumbSep><Chevron dir="right" color={c.muted} /></CrumbSep>
          <Crumb>Dashboards</Crumb><CrumbSep><Chevron dir="right" color={c.muted} /></CrumbSep>
          <Crumb>New dashboard</Crumb><CrumbSep><Chevron dir="right" color={c.muted} /></CrumbSep>
          <Crumb $last>Edit panel</Crumb>
        </Crumbs>
        <SearchBox><SearchIcon /><span>Search or jump to...</span><KeyboardIcon /><small>ctrl+k</small></SearchBox>
        <HeaderActions>
          <ControlSlot $w={29}><svg width="19" height="19" viewBox="0 0 19 19"><path d="M9.500 1v17M1 9.500h17" stroke={c.muted} strokeWidth="1.800" strokeLinecap="round" /></svg></ControlSlot>
          <Chevron color={c.muted} />
          <Rule $h={36} $ml={25} $mr={20} />
          <ControlSlot $w={59}><HelpIcon /></ControlSlot>
          <ControlSlot $w={57}><MonitorIcon /></ControlSlot>
          <span>Sign in</span>
        </HeaderActions>
      </Header>

      <ActionRow>
        <Button $kind="secondary" $w={214}>
          <svg width="12" height="12" viewBox="0 0 12 12"><path d="M11 6H1.500M5.500 1.500 1 6l4.500 4.500" fill="none" stroke={c.text} strokeWidth="1.700" strokeLinecap="round" strokeLinejoin="round" /></svg>
          Back to dashboard
        </Button>
        <Rule $h={36} $ml={12} $mr={12} $w={2} />
        <Button $kind="outline" $w={144}>Discard panel</Button>
        <ButtonGap />
        <Button $kind="primary" $w={165}>Save dashboard</Button>
      </ActionRow>

      <Editor>
        <Stage>
          <Toolbar>
            <TableView>Table view<Switch /></TableView>
            <Group $w={283}>
              <Segment><ClockIcon /><span>Last 6 hours</span><Chevron /></Segment>
              <Segment $w={52} $div><SearchIcon minus color={c.text} size={24} /></Segment>
            </Group>
            <Group $w={194}>
              <Segment><RefreshIcon /><span>Refresh</span></Segment>
              <Segment $w={49} $div><Chevron /></Segment>
            </Group>
          </Toolbar>
          <Panel>
            <PanelHead>Panel Title<MenuButton><i /><i /><i /></MenuButton></PanelHead>
            <Chart />
            <Legend>{legend.map(([name, w, color]) => <LegendItem key={name} $w={w} $color={color}>{name}</LegendItem>)}</Legend>
            <HandleX />
          </Panel>
          <QueryPane>
            <ExpandButton>
              <svg width="16" height="20" viewBox="0 0 16 20" fill="none" stroke={c.text} strokeWidth="1.800" strokeLinecap="round" strokeLinejoin="round"><path d="M1.500 1.500h13M8 18.500V5M4 9l4-4 4 4" /></svg>
            </ExpandButton>
          </QueryPane>
        </Stage>

        <Options>
          <OptionsTop>
            <Field $filled><SeriesIcon /><span>Time series</span><Chevron /></Field>
            <Field><SearchIcon /><span>Search options</span></Field>
            <Radio><RadioItem $on>All</RadioItem><RadioItem>Overrides</RadioItem></Radio>
          </OptionsTop>
          <ScrollArea>
            <OptionList>
              <GroupTitle>Panel options<Chevron dir="up" /></GroupTitle>
              <Label $mt={11} $mb={6}>Title</Label>
              <TextInput>Panel Title</TextInput>
              <Label $mt={23} $mb={5}>Description</Label>
              <TextArea>
                <svg width="11" height="11" viewBox="0 0 11 11" stroke="#d0d0d0" strokeWidth="1.300"><path d="M1 10 10 1M7 10l3-3" /></svg>
              </TextArea>
              <Label $mt={0} $mb={6}>Transparent background</Label>
              <Switch />
              <LinkGroups>
                <GroupTitle $sub>Panel links<Chevron /></GroupTitle>
                <GroupTitle $sub>Repeat options<Chevron /></GroupTitle>
              </LinkGroups>
            </OptionList>
            <ScrollY>
              <Triangle w={10} h={8} d="M5 1 9 7H1z" />
              <i />
              <Triangle w={10} h={8} d="M5 7 9 1H1z" />
            </ScrollY>
          </ScrollArea>
          <ScrollX>
            <Triangle w={8} h={10} d="M1 5 7 1v8z" />
            <i />
            <Triangle w={8} h={10} d="M7 5 1 1v8z" />
          </ScrollX>
          <HandleY />
        </Options>
      </Editor>

      <Taskbar>
        <AppRow>
          {apps.map((a, i) =>
            a.icon ? (
              <AppSlot key={i}>{a.icon}<Pill $hidden={!a.open} /></AppSlot>
            ) : (
              <ActiveSlot key={i}><ActiveTile><BraveIcon w={30} h={36} fill="url(#brave)" /><Pill $on /></ActiveTile></ActiveSlot>
            )
          )}
        </AppRow>
        <Tray>
          <svg width="17" height="11" viewBox="0 0 17 11"><path d="m1.500 9.500 7-7.500 7 7.500" fill="none" stroke="#fff" strokeWidth="2" strokeLinecap="round" /></svg>
          <Language>ENG<br />IN</Language>
          <ControlSlot $w={36}>
            <svg width="24" height="18" viewBox="0 0 24 18" fill="none" stroke="#fff" strokeWidth="1.900" strokeLinecap="round"><path d="M1 6.500C7-.8 17-.8 23 6.500M4.500 9.700c4.500-5 10.500-5 15 0M8 12.800c2.500-2.600 5.500-2.600 8 0" /><circle cx="12" cy="15.700" r="2" fill="#fff" stroke="none" /></svg>
          </ControlSlot>
          <ControlSlot $w={35}>
            <svg width="25" height="20" viewBox="0 0 25 20" fill="none" stroke="#fff" strokeWidth="1.700" strokeLinecap="round" strokeLinejoin="round"><path d="M1 7h4l5-5v16l-5-5H1zM13.500 7c1.500 2 1.500 4 0 6M16.500 4.500c3 3.500 3 7.500 0 11" /><path d="M20 2c4 5 4 11 0 16" stroke="#6b5c66" /></svg>
          </ControlSlot>
          <ControlSlot $w={51}>
            <svg width="26" height="22" viewBox="0 0 26 22"><rect x="2" y="5" width="19" height="14.500" rx="3" fill="none" stroke="#fff" strokeWidth="1.700" /><path d="M9.500 7.300h9.300v9.900H4.300V12.500z" fill="#fff" /><path d="M22 9.500h2.300v5.500H22z" fill="#fff" /><path d="M5.500 0 1 7.500h3L2.500 13 9 5H5.500L7.500 0z" fill="#fff" stroke="#38222c" strokeWidth=".8" /></svg>
          </ControlSlot>
          <svg width="20" height="24" viewBox="0 0 20 24" fill="#f0bdf3"><path d="M10 0c4.500 0 8 3.500 8 8v5l2 4.500a.8.800 0 0 1-.8 1H.8a.8.800 0 0 1-.8-1L2 13V8c0-4.500 3.500-8 8-8zM6 20h8c-.6 2-2 3-4 3s-3.400-1-4-3z" /></svg>
        </Tray>
      </Taskbar>
    </Screen>
  );
}
